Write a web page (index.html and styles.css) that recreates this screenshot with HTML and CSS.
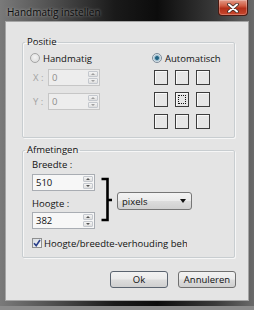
FILE: index.html
```html
<!DOCTYPE html>
<html lang="nl">
<head>
    <meta charset="UTF-8">
    <title>Handmatig instellen</title>
    <link rel="stylesheet" href="styles.css">
</head>
<body>
    <div class="window">
        <div class="titlebar">
            <span class="title">Handmatig instellen</span>
            <span class="close">
                <svg width="12" height="10" viewBox="0 0 12 10">
                    <path d="M2 1.5 L10 8.5 M10 1.5 L2 8.5" stroke="#3a2a26" stroke-width="3.6" stroke-linecap="round"/>
                    <path d="M2 1.5 L10 8.5 M10 1.5 L2 8.5" stroke="#fff" stroke-width="2" stroke-linecap="round"/>
                </svg>
            </span>
        </div>
        <div class="client">
            <fieldset class="group">
                <legend>Positie</legend>
                <div class="group-body positie">
                    <div class="col-left">
                        <div class="radio-row">
                            <span class="radio"></span>Handmatig
                        </div>
                        <div class="coord-row">
                            <span class="coord-label">X :</span>
                            <div class="spin disabled coord">
                                <span class="spin-value">0</span>
                                <span class="spin-btns"><span class="spin-btn up"></span><span class="spin-btn down"></span></span>
                            </div>
                        </div>
                        <div class="coord-row second">
                            <span class="coord-label">Y :</span>
                            <div class="spin disabled coord">
                                <span class="spin-value">0</span>
                                <span class="spin-btns"><span class="spin-btn up"></span><span class="spin-btn down"></span></span>
                            </div>
                        </div>
                    </div>
                    <div class="col-right">
                        <div class="radio-row">
                            <span class="radio checked"></span>Automatisch
                        </div>
                        <div class="anchor-grid">
                            <span class="cell"></span><span class="cell"></span><span class="cell"></span>
                            <span class="cell"></span><span class="cell focus"></span><span class="cell"></span>
                            <span class="cell"></span><span class="cell"></span><span class="cell"></span>
                        </div>
                    </div>
                </div>
            </fieldset>

            <fieldset class="group afmetingen">
                <legend>Afmetingen</legend>
                <div class="group-body">
                    <div class="size-row">
                        <div class="size-col">
                            <div class="field-label">Breedte :</div>
                            <div class="spin size">
                                <span class="spin-value">510</span>
                                <span class="spin-btns"><span class="spin-btn up"></span><span class="spin-btn down"></span></span>
                            </div>
                            <div class="field-label second">Hoogte :</div>
                            <div class="spin size">
                                <span class="spin-value">382</span>
                                <span class="spin-btns"><span class="spin-btn up"></span><span class="spin-btn down"></span></span>
                            </div>
                        </div>
                        <svg class="bracket" width="18" height="71" viewBox="0 0 18 71">
                            <path d="M5.5 21 H11.5 V62 H5.5 M11.5 42 H16" fill="none" stroke="#000" stroke-width="2.6"/>
                        </svg>
                        <div class="dropdown">
                            <span>pixels</span>
                            <span class="dropdown-arrow"></span>
                        </div>
                    </div>
                    <div class="check-row">
                        <span class="checkbox">
                            <svg width="8" height="8" viewBox="0 0 8 8">
                                <path d="M1 4.2 L3.2 6.6 L7 1" fill="none" stroke="#2a3f8a" stroke-width="1.6"/>
                            </svg>
                        </span>
                        <span class="check-text">Hoogte/breedte-verhouding behouden</span>
                    </div>
                </div>
            </fieldset>

            <div class="buttons">
                <button class="btn default">Ok</button>
                <button class="btn">Annuleren</button>
            </div>
        </div>
    </div>
</body>
</html>
```

FILE: styles.css
```css
body {
    margin: 0;
    padding: 0;
    background-color: #8c8c8c;
    font-family: "Open Sans", "Noto Sans", sans-serif;
    font-size: 9.5px;
    color: #111;
}

/* Window frame */
.window {
    width: 254px;
    height: 306px;
    box-sizing: border-box;
    padding: 0 5px 5px 5px;
    display: flex;
    flex-direction: column;
    background: linear-gradient(90deg, #7a7a7a 0%, #555 18%, #1a1a1a 45%, #0c0c0c 62%, #3a3a3a 85%, #6a6a6a 100%);
}

.titlebar {
    height: 21px;
    display: flex;
    justify-content: space-between;
    align-items: flex-start;
}

.title {
    padding: 5px 0 0 2px;
    font-size: 10px;
    color: #0c0c0c;
    text-shadow: 0 0 3px rgba(255, 255, 255, 0.55);
}

.close {
    width: 30px;
    height: 16px;
    margin-right: 1px;
    box-sizing: border-box;
    display: flex;
    justify-content: center;
    align-items: center;
    border: 1px solid #4a1a12;
    border-top: none;
    border-radius: 0 0 4px 4px;
    background: linear-gradient(#e39a88 0%, #cf5a40 40%, #b3301a 55%, #c9482e 100%);
    box-shadow: inset 0 0 0 1px rgba(255, 255, 255, 0.25);
}

.client {
    flex: 1;
    background-color: #e4e4e4;
    border: 1px solid #a5a5a5;
    padding-top: 13px;
    display: flex;
    flex-direction: column;
}

/* Group boxes */
.group {
    margin: 0 13px 0 16px;
    padding: 0;
    border: 1px solid #c8cdd0;
    box-shadow: inset 1px 1px 0 #f6f6f6, 1px 1px 0 #f6f6f6;
    border-radius: 2px;
}

.group legend {
    margin-left: 2px;
    padding: 0 2px;
    line-height: 14px;
}

.group-body {
    padding: 2px 0 8px 7px;
}

.afmetingen {
    margin-top: 5px;
}

.afmetingen .group-body {
    padding: 1px 0 7px 9px;
}

/* Positie */
.positie {
    display: flex;
}

.col-left {
    width: 122px;
}

.radio-row {
    height: 14px;
    display: flex;
    align-items: center;
}

.radio {
    width: 10px;
    height: 10px;
    box-sizing: border-box;
    margin-right: 3px;
    border-radius: 50%;
    border: 1px solid #a4a4a4;
    background: radial-gradient(circle at 50% 40%, #f4f4f4 0%, #d8d8d8 100%);
}

.radio.checked {
    border-color: #7d8c9a;
    background: radial-gradient(circle, #1f5778 0%, #2d6e8c 28%, #8fb3c6 40%, #e8eef2 70%);
}

.coord-row {
    display: flex;
    align-items: center;
    margin-top: 4px;
}

.coord-row.second {
    margin-top: 7px;
}

.coord-label {
    width: 15px;
    padding-left: 3px;
    color: #a3a3a3;
}

.spin {
    display: flex;
    box-sizing: border-box;
    height: 17px;
    border: 1px solid #a9adb3;
    background-color: #f7f7f7;
}

.spin.coord {
    width: 52px;
}

.spin.size {
    width: 63px;
}

.spin.disabled {
    border-color: #c6c6c6;
    background-color: #ededed;
    color: #8d8d8d;
}

.spin-value {
    flex: 1;
    padding-left: 3px;
    line-height: 15px;
}

.spin-btns {
    width: 10px;
    display: flex;
    flex-direction: column;
    gap: 1px;
    padding: 1px;
}

.spin-btn {
    flex: 1;
    display: flex;
    justify-content: center;
    align-items: center;
    border: 1px solid #c4c8ce;
    border-radius: 1px;
    background: linear-gradient(#f4f4f4, #dedede);
}

.spin-btn::after {
    content: "";
    border-left: 2px solid transparent;
    border-right: 2px solid transparent;
}

.spin-btn.up::after {
    border-bottom: 2px solid #555;
}

.spin-btn.down::after {
    border-top: 2px solid #555;
}

.disabled .spin-btn::after {
    opacity: 0.5;
}

.anchor-grid {
    margin: 5px 0 0 2px;
    display: grid;
    grid-template-columns: repeat(3, 14px);
    grid-auto-rows: 15px;
    gap: 7px;
}

.cell {
    box-sizing: border-box;
    border: 1px solid #3c3c3c;
    background-color: #e6e6e6;
    box-shadow: inset 1px 1px 0 #f8f8f8;
    position: relative;
}

.cell.focus::after {
    content: "";
    position: absolute;
    top: 2px;
    left: 2px;
    right: 2px;
    bottom: 2px;
    border: 1px dotted #111;
}

/* Afmetingen */
.size-row {
    display: flex;
    align-items: flex-start;
}

.field-label {
    line-height: 14px;
    margin-bottom: 2px;
}

.field-label.second {
    margin-top: 6px;
    margin-bottom: 1px;
}

.bracket {
    margin-left: 1px;
}

.dropdown {
    width: 75px;
    height: 18px;
    margin: 34px 0 0 3px;
    box-sizing: border-box;
    padding: 0 5px 0 4px;
    display: flex;
    justify-content: space-between;
    align-items: center;
    border: 1px solid #767676;
    border-radius: 3px;
    background: linear-gradient(#f3f3f3 0%, #ebebeb 48%, #dcdcdc 52%, #d0d0d0 100%);
}

.dropdown-arrow {
    border-left: 3px solid transparent;
    border-right: 3px solid transparent;
    border-top: 4px solid #111;
}

.check-row {
    display: flex;
    align-items: center;
    height: 14px;
    margin-top: 7px;
}

.checkbox {
    width: 10px;
    height: 10px;
    box-sizing: border-box;
    margin-right: 2px;
    display: flex;
    justify-content: center;
    align-items: center;
    border: 1px solid #8e8f8f;
    background: linear-gradient(135deg, #d8dde2, #f6f6f6);
}

.check-text {
    width: 143px;
    overflow: hidden;
    white-space: nowrap;
}

/* Dialog buttons */
.buttons {
    display: flex;
    justify-content: flex-end;
    gap: 10px;
    margin: 13px 12px 0 0;
}

.btn {
    width: 58px;
    height: 17px;
    padding: 0;
    font-family: inherit;
    font-size: 9.5px;
    color: #111;
    border: 1px solid #707070;
    border-radius: 3px;
    background: linear-gradient(#f2f2f2 0%, #ebebeb 48%, #dddddd 52%, #cfcfcf 100%);
}

.btn.default {
    border-color: #5b6470;
}
```
